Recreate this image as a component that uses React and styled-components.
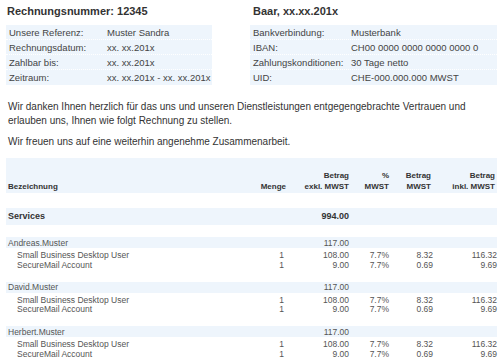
import styled, { createGlobalStyle } from 'styled-components'

const GlobalStyle = createGlobalStyle`
    body{
        margin: 0;
        background: #fff;
        font-family: "Liberation Sans", Arial, sans-serif;
        color: #3b3b3b;
    }
`

const Page = styled.div`
    width: 500px;
    box-sizing: border-box;
    padding: 5px 3px 0 6px;
`

const Top = styled.div`
    display: grid;
    grid-template-columns: 206px 247px;
    column-gap: 38px;
`

const Heading = styled.h1`
    margin: 0 0 7px;
    padding-left: ${p => p.$indent || 1}px;
    font-size: 11px;
    line-height: 13px;
    font-weight: 700;
    color: #333;
`

const InfoBox = styled.div`
    background: #eef5fc;
`

const InfoRow = styled.div`
    display: grid;
    grid-template-columns: 98px 1fr;
    height: 15px;
    box-sizing: border-box;
    align-items: center;
    padding-left: 3px;
    font-size: 9.5px;
    color: #444;
    white-space: nowrap;

    &:not(:last-child){
        border-bottom: 1px dotted #fff;
    }
`

const Text = styled.p`
    margin: ${p => p.$top}px 0 0 2px;
    font-size: 10px;
    line-height: 13.5px;
    color: #333;
`

const Table = styled.div`
    margin-top: 9px;
`

const Row = styled.div`
    display: grid;
    grid-template-columns: 1fr 60px 63px 40px 44px 64px;
    align-items: ${p => p.$end ? 'end' : 'center'};
    height: ${p => p.$h}px;
    margin-top: ${p => p.$top || 0}px;
    box-sizing: border-box;
    background: ${p => p.$shaded ? '#eef5fc' : 'transparent'};
    font-size: ${p => p.$size || 8.5}px;
    font-weight: ${p => p.$bold ? 700 : 400};
    color: ${p => p.$bold ? '#333' : '#555'};
`

const HeadRow = styled(Row)`
    padding-bottom: 1px;
    line-height: 11px;
`

const Cell = styled.div`
    text-align: ${p => p.$left ? 'left' : 'right'};
    padding-left: ${p => p.$pad || 0}px;
    padding-right: ${p => p.$rpad || 0}px;
    white-space: nowrap;
`

const Group = styled.div`
    margin-top: ${p => p.$top}px;
`

const left = [
    ['Unsere Referenz:', 'Muster Sandra'],
    ['Rechnungsdatum:', 'xx. xx.201x'],
    ['Zahlbar bis:', 'xx. xx.201x'],
    ['Zeitraum:', 'xx. xx.201x - xx. xx.201x'],
]

const right = [
    ['Bankverbindung:', 'Musterbank'],
    ['IBAN:', 'CH00 0000 0000 0000 0000 0'],
    ['Zahlungskonditionen:', '30 Tage netto'],
    ['UID:', 'CHE-000.000.000 MWST'],
]

const users = ['Andreas.Muster', 'David.Muster', 'Herbert.Muster']

const items = [
    { name: 'Small Business Desktop User', qty: 1, net: '108.00', rate: '7.7%', tax: '8.32', gross: '116.32' },
    { name: 'SecureMail Account', qty: 1, net: '9.00', rate: '7.7%', tax: '0.69', gross: '9.69' },
]

function Info({ rows }) {
    return (
        <InfoBox>
            {rows.map(([label, value]) => (
                <InfoRow key={label}>
                    <span>{label}</span>
                    <span>{value}</span>
                </InfoRow>
            ))}
        </InfoBox>
    )
}

export default function App() {
    return (
        <Page>
            <GlobalStyle />
            <Top>
                <div>
                    <Heading>Rechnungsnummer: 12345</Heading>
                    <Info rows={left} />
                </div>
                <div>
                    <Heading $indent={3}>Baar, xx.xx.201x</Heading>
                    <Info rows={right} />
                </div>
            </Top>

            <Text $top={15}>
                Wir danken Ihnen herzlich für das uns und unseren Dienstleistungen entgegengebrachte Vertrauen und<br />
                erlauben uns, Ihnen wie folgt Rechnung zu stellen.
            </Text>
            <Text $top={8}>Wir freuen uns auf eine weiterhin angenehme Zusammenarbeit.</Text>

            <Table>
                <HeadRow $h={35} $end $shaded $bold $size={8}>
                    <Cell $left $pad={2}>Bezeichnung</Cell>
                    <Cell>Menge</Cell>
                    <Cell>Betrag<br />exkl. MWST</Cell>
                    <Cell>%<br />MWST</Cell>
                    <Cell $rpad={2}>Betrag<br />MWST</Cell>
                    <Cell $rpad={2}>Betrag<br />inkl. MWST</Cell>
                </HeadRow>

                <Row $h={17} $top={15} $shaded $bold $size={9}>
                    <Cell $left $pad={2}>Services</Cell>
                    <Cell />
                    <Cell>994.00</Cell>
                </Row>

                {users.map((user, i) => (
                    <Group key={user} $top={i === 0 ? 12.5 : 12.5}>
                        <Row $h={11} $shaded>
                            <Cell $left $pad={2}>{user}</Cell>
                            <Cell />
                            <Cell>117.00</Cell>
                        </Row>
                        {items.map((item, j) => (
                            <Row key={item.name} $h={9.5} $top={j === 0 ? 2 : 0}>
                                <Cell $left $pad={11}>{item.name}</Cell>
                                <Cell $rpad={2}>{item.qty}</Cell>
                                <Cell>{item.net}</Cell>
                                <Cell>{item.rate}</Cell>
                                <Cell>{item.tax}</Cell>
                                <Cell>{item.gross}</Cell>
                            </Row>
                        ))}
                    </Group>
                ))}
            </Table>
        </Page>
    )
}
